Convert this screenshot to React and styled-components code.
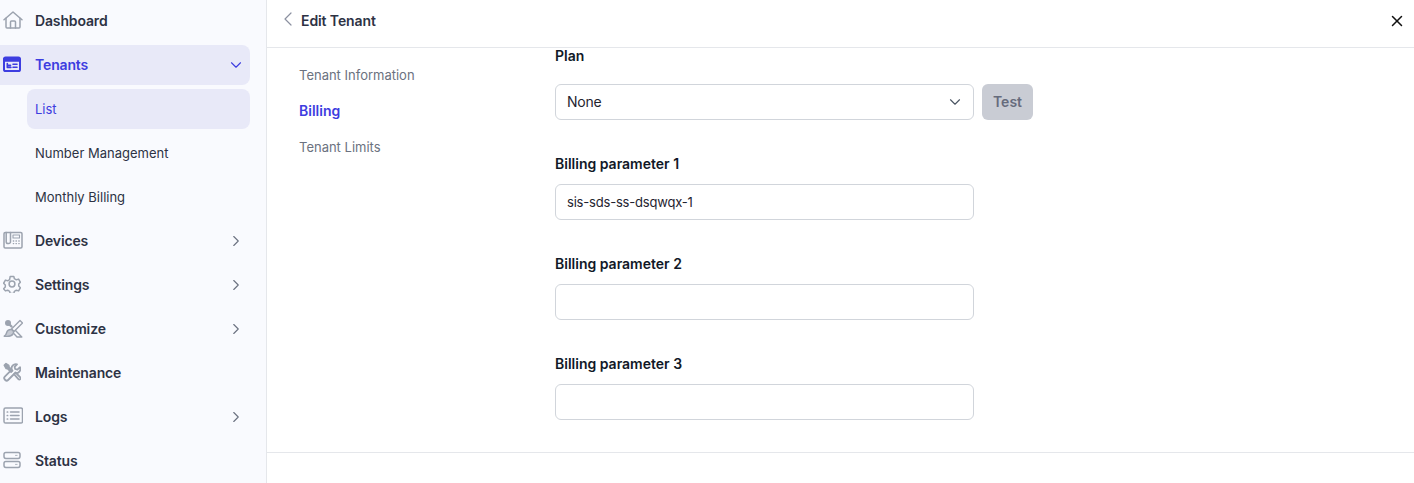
import React from 'react';
import styled, { createGlobalStyle } from 'styled-components';
import { ChevronDown, ChevronRight, ChevronLeft, X } from 'lucide-react';

const Global = createGlobalStyle`
  html, body { margin: 0; padding: 0; height: 100%; background: #fff; overflow: hidden; }
  body { font-family: Inter, "Liberation Sans", sans-serif; font-size: 14px; color: #2d3244; }
  #root { height: 100%; }
`;

const Page = styled.div`display: flex; width: 1414px; height: 483px; overflow: hidden; background: #fff;`;
const Sidebar = styled.aside`
  width: 267px; flex: none; box-sizing: border-box; height: 483px; overflow: hidden;
  background: #f9fafe; border-right: 1px solid #e5e7eb; padding-top: 1px;
  display: flex; flex-direction: column; gap: 4px;
`;
const Row = styled.div`
  display: flex; align-items: center; height: 40px; flex: none; width: 250px; box-sizing: border-box;
  border-radius: 0 8px 8px 0; padding: 0 5px 2px 3px; font-weight: 600; font-size: 14px; letter-spacing: -0.15px;
  color: ${p => (p.$active ? '#3d3de0' : '#2d3244')};
  background: ${p => (p.$active ? '#e8e9f8' : 'transparent')};
`;
const IconSlot = styled.span`
  width: 32px; flex: none; display: flex; align-items: center;
  color: ${p => (p.$active ? '#3d3de0' : '#9ca3af')};
`;
const RowLabel = styled.span`flex: 1;`;
const SubRow = styled.div`
  display: flex; align-items: center; height: 40px; flex: none; box-sizing: border-box;
  width: 223px; margin-left: 27px; padding: 0 0 1px 8px; border-radius: 8px; font-size: 13px;
  color: ${p => (p.$active ? '#3d3de0' : '#2d3244')};
  background: ${p => (p.$active ? '#e8e9f8' : 'transparent')};
`;
const Main = styled.main`flex: 1; min-width: 0; display: flex; flex-direction: column; height: 483px;`;
const Header = styled.header`
  height: 48px; flex: none; box-sizing: border-box; border-bottom: 1px solid #e5e7eb;
  display: flex; align-items: center; padding: 0 8px 7px 9px;
`;
const Title = styled.h1`flex: 1; margin: 0 0 0 1px; font-size: 14px; font-weight: 600; color: #2d3244; letter-spacing: -0.1px;`;
const Body = styled.div`flex: 1; min-height: 0; display: flex; overflow: hidden;`;
const Footer = styled.footer`flex: none; border-top: 1px solid #e5e7eb; height: 30px;`;
const SideNav = styled.nav`
  width: 288px; flex: none; box-sizing: border-box; padding: 9px 0 0 32px;
  display: flex; flex-direction: column;
`;
const NavLink = styled.div`
  height: 36px; line-height: 36px;
  font-size: ${p => (p.$active ? 14 : 13)}px;
  font-weight: ${p => (p.$active ? 600 : 400)};
  color: ${p => (p.$active ? '#3d3de0' : '#6b7280')};
`;
const Form = styled.form`margin-top: -2px; width: 478px; flex: none; display: flex; flex-direction: column;`;
const Field = styled.div`
  display: flex; flex-direction: column; margin-bottom: 34px;
  gap: ${p => p.$gap}px;
`;
const Label = styled.label`font-size: 14px; line-height: 20px; font-weight: 600; color: #111827;`;
const Line = styled.div`display: flex; gap: 8px;`;
const Input = styled.input`
  width: 419px; height: 36px; box-sizing: border-box; border: 1px solid #d1d5db; border-radius: 6px;
  padding: 0 11px; font: 400 13px Inter, "Liberation Sans", sans-serif; letter-spacing: -0.2px; color: #1f2430; background: #fff; outline: none;
`;
const Select = styled.div`
  width: 419px; height: 36px; box-sizing: border-box; border: 1px solid #d1d5db; border-radius: 6px;
  padding: 0 9px 2px 11px; font-size: 14px; letter-spacing: -0.2px; color: #1f2430; background: #fff;
  display: flex; align-items: center; justify-content: space-between;
`;
const TestButton = styled.button`
  width: 51px; height: 36px; border: 0; border-radius: 6px; background: #c9ccd4; color: #666b7c;
  font: 600 14px Inter, "Liberation Sans", sans-serif; padding: 0 0 2px;
`;
const CloseBtn = styled.span`display: flex; color: #111; margin-top: 2px;`;
const Back = styled.span`display: flex; color: #8b90a0; margin-top: -2px;`;
const Chevron = styled.span`display: flex; margin-top: 2px; color: ${p => (p.$active ? '#3d3de0' : p.$dark ? '#4b5563' : '#6b7280')};`;

const Svg = ({ w = 20, h = 20, vb, fill = 'none', sw = 1.5, children }) => (
  <svg width={w} height={h} viewBox={vb || `0 0 ${w} ${h}`} fill={fill} stroke="currentColor" strokeWidth={sw} strokeLinecap="round" strokeLinejoin="round">{children}</svg>
);

const Home = () => <Svg><path d="M1 9.8 10 2l9 7.8" /><path d="M3 8.3V17a1 1 0 0 0 1 1h12a1 1 0 0 0 1-1V8.3" /><path d="M7.5 18v-6a1 1 0 0 1 1-1h3a1 1 0 0 1 1 1v6" /></Svg>;
const Tenant = () => <Svg w={18} h={18}><rect x="1" y="2.5" width="16" height="13.5" rx="1.6" strokeWidth="2" /><path d="M1 3.5h16v2.7H1z" fill="currentColor" strokeWidth="1" /><path d="M4.3 8.6v3.8h3.6M4.3 10.4h3.2M10 9.3h4M10 12.3h4" strokeWidth="1.6" /></Svg>;
const Devices = () => <Svg><rect x="1" y="2.5" width="18" height="15.5" rx="1.2" /><path d="M7.5 2.5v9.2a1.8 1.8 0 0 1-1.8 1.8H5a1.8 1.8 0 0 1-1.8-1.8V2.5" /><path d="M10 5h6.5v3H10z" strokeWidth="1.1" /><path d="M10.3 11h.4M13 11h.4M15.8 11h.4M10.3 13.6h.4M13 13.6h.4M15.8 13.6h.4" strokeWidth="1.3" /></Svg>;
const Gear = () => <Svg w={18} h={18}><path d="M7.2 1.4h3.6l.6 2.3 1.9 1.1 2.3-.7 1.8 3.2-1.7 1.7v2l1.7 1.7-1.8 3.2-2.3-.7-1.9 1.1-.6 2.3H7.2l-.6-2.3-1.9-1.1-2.3.7L.6 13.7l1.7-1.7V10L.6 8.3l1.8-3.2 2.3.7 1.9-1.1z" /><circle cx="9" cy="9" r="2.9" /></Svg>;
const Customize = () => <Svg>
  <path d="M17 2.5 19.5 5 11 13.5 8.5 11z" strokeWidth="1.4" />
  <circle cx="5" cy="5" r="3" fill="currentColor" stroke="none" />
  <path d="M5 5 8.5 8.5" strokeWidth="2.4" />
  <path d="M12.5 12.5 18.8 19H14l-3-3.2" strokeWidth="1.4" />
  <path d="M8 11.5c-2.5 0-4 1.5-4.5 3.5-.3 1.4-1 2.5-2.3 3.2 3.5.5 7.3 0 8.8-2.2 1.2-1.7.3-4.5-2-4.5z" fill="currentColor" fillOpacity=".55" strokeWidth="1.4" />
</Svg>;
const Tools = () => <Svg w={18} h={20} vb="0 0 18 20">
  <path d="M1.2 3.2 3 1.5l2.8 1.9.3 1.7 3.6 3.6-1.6 1.6L4.5 6.7l-1.5-.3z" fill="currentColor" />
  <path d="M17 5.2 14.4 7.6l-2.2-.6-.6-2.2L14 2.4a4.2 4.2 0 0 0-5.2 5.3l-7 7a2 2 0 0 0 0 2.8l.5.5a2 2 0 0 0 2.8 0l7-7A4.2 4.2 0 0 0 17 5.2z" strokeWidth="1.8" />
  <path d="m11 12.2 4.4 5a1.3 1.3 0 0 0 1.9 0 1.3 1.3 0 0 0 0-1.9L12.5 10.5" strokeWidth="1.8" />
</Svg>;
const Logs = () => <Svg><rect x="1" y="2" width="18.5" height="15" rx="1.6" /><path d="M7.5 6h8.5M7.5 9.5h8.5M7.5 13h8.5" /><path d="M4.3 6h.3M4.3 9.5h.3M4.3 13h.3" strokeWidth="1.7" /></Svg>;
const Status = () => <Svg w={18} h={18}><rect x="1" y="1.4" width="16" height="6" rx="1.8" /><rect x="1" y="10.4" width="16" height="6" rx="1.8" /><path d="M12.5 4.4h1.6M12.5 13.4h1.6" strokeWidth=".8" /></Svg>;

const items = [
  { label: 'Dashboard', Icon: Home },
  { label: 'Tenants', Icon: Tenant, active: true, open: true, subs: [
    { label: 'List', active: true }, { label: 'Number Management' }, { label: 'Monthly Billing' },
  ] },
  { label: 'Devices', Icon: Devices, more: true },
  { label: 'Settings', Icon: Gear, more: true },
  { label: 'Customize', Icon: Customize, more: true },
  { label: 'Maintenance', Icon: Tools },
  { label: 'Logs', Icon: Logs, more: true },
  { label: 'Status', Icon: Status },
];

const fields = [
  { label: 'Billing parameter 1', value: 'sis-sds-ss-dsqwqx-1' },
  { label: 'Billing parameter 2', value: '' },
  { label: 'Billing parameter 3', value: '' },
];

export default function App() {
  return (
    <Page>
      <Global />
      <Sidebar>
        {items.map(({ label, Icon, active, open, more, subs }) => (
          <React.Fragment key={label}>
            <Row $active={active}>
              <IconSlot $active={active}><Icon /></IconSlot>
              <RowLabel>{label}</RowLabel>
              {open && <Chevron $active><ChevronDown size={18} strokeWidth={1.5} /></Chevron>}
              {more && <Chevron><ChevronRight size={18} strokeWidth={1.5} /></Chevron>}
            </Row>
            {subs && subs.map(s => <SubRow key={s.label} $active={s.active}>{s.label}</SubRow>)}
          </React.Fragment>
        ))}
      </Sidebar>
      <Main>
        <Header>
          <Back><ChevronLeft size={24} strokeWidth={1.2} /></Back>
          <Title>Edit Tenant</Title>
          <CloseBtn><X size={18} strokeWidth={2} /></CloseBtn>
        </Header>
        <Body>
          <SideNav>
            <NavLink>Tenant Information</NavLink>
            <NavLink $active>Billing</NavLink>
            <NavLink>Tenant Limits</NavLink>
          </SideNav>
          <Form>
            <Field $gap={18}>
              <Label>Plan</Label>
              <Line>
                <Select>None<Chevron $dark><ChevronDown size={18} strokeWidth={1.5} /></Chevron></Select>
                <TestButton type="button">Test</TestButton>
              </Line>
            </Field>
            {fields.map(f => (
              <Field key={f.label} $gap={10}>
                <Label>{f.label}</Label>
                <Input readOnly value={f.value} />
              </Field>
            ))}
          </Form>
        </Body>
        <Footer />
      </Main>
    </Page>
  );
}
